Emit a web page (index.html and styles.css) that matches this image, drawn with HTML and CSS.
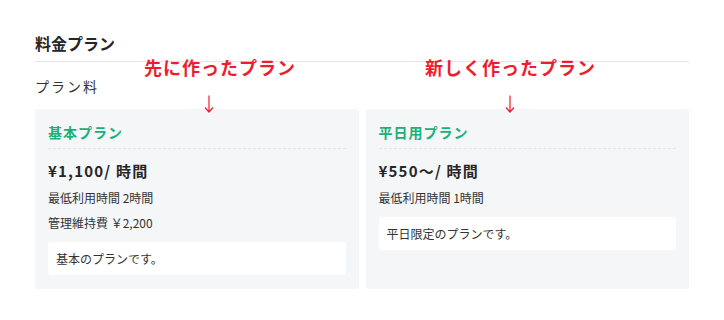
FILE: index.html
```html
<!DOCTYPE html>
<html lang="ja">
<head>
    <meta charset="UTF-8">
    <meta name="viewport" content="width=device-width, initial-scale=1.0">
    <title>料金プラン</title>
    <link rel="stylesheet" href="styles.css">
</head>
<body>

    <!-- Pricing Section -->
    <div class="page">
        <h2 class="section-title">料金プラン</h2>
        <p class="label">プラン料</p>

        <div class="plans">
            <div class="plan">
                <h3 class="plan-name">基本プラン</h3>
                <p class="price">¥1,100/ 時間</p>
                <p class="detail">最低利用時間 2時間</p>
                <p class="detail">管理維持費 ￥2,200</p>
                <div class="note">基本のプランです。</div>
            </div>
            <div class="plan">
                <h3 class="plan-name">平日用プラン</h3>
                <p class="price">¥550〜/ 時間</p>
                <p class="detail">最低利用時間 1時間</p>
                <div class="note">平日限定のプランです。</div>
            </div>
        </div>

        <!-- annotations drawn over the screenshot -->
        <div class="annotation annotation-old">先に作ったプラン</div>
        <svg class="arrow arrow-old" width="10" height="18" viewBox="0 0 10 18">
            <path d="M5 0.5 V17 M1 12.5 L5 17 L9 12.5" fill="none" stroke="currentColor" stroke-width="1.2"/>
        </svg>
        <div class="annotation annotation-new">新しく作ったプラン</div>
        <svg class="arrow arrow-new" width="10" height="18" viewBox="0 0 10 18">
            <path d="M5 0.5 V17 M1 12.5 L5 17 L9 12.5" fill="none" stroke="currentColor" stroke-width="1.2"/>
        </svg>
    </div>

</body>
</html>
```

FILE: styles.css
```css
:root {
    --green: #19b17a;
    --red: #ee1d2d;
    --dark: #262626;
    --card: #f5f6f8;
}

* {
    margin: 0;
    padding: 0;
    box-sizing: border-box;
    font-family: "Noto Sans CJK JP", "Noto Sans", sans-serif;
}

body {
    background: #fff;
    color: var(--dark);
}

.page {
    position: relative;
    padding: 31px 35px 0;
}

.section-title {
    font-size: 16px;
    font-weight: bold;
    line-height: 24px;
    padding-bottom: 6px;
    border-bottom: 1px solid #e4e4e4;
}

.label {
    font-size: 14px;
    line-height: 21px;
    letter-spacing: 2px;
    color: #333;
    margin-top: 14px;
}

.plans {
    display: grid;
    grid-template-columns: 1fr 1fr;
    gap: 7px;
    margin-top: 12px;
}

.plan {
    background: var(--card);
    border-radius: 3px;
    padding: 13px 13px 13px;
    min-height: 180px;
}

.plan-name {
    font-size: 14px;
    font-weight: bold;
    line-height: 21px;
    letter-spacing: 1px;
    color: var(--green);
    padding-bottom: 5px;
    border-bottom: 1px dashed #e2e4e8;
}

.price {
    font-size: 15px;
    font-weight: bold;
    line-height: 22px;
    letter-spacing: 1.2px;
    margin-top: 11px;
    margin-bottom: 3px;
}

.detail {
    font-size: 12px;
    line-height: 25px;
    color: #333;
}

.detail:first-of-type {
    margin-top: 3px;
}

.note {
    background: #fff;
    border-radius: 3px;
    font-size: 12px;
    line-height: 17px;
    color: #333;
    padding: 8px 8px;
    margin-top: 7px;
}

.annotation {
    position: absolute;
    top: 54px;
    font-size: 18px;
    font-weight: bold;
    line-height: 27px;
    letter-spacing: 1px;
    color: var(--red);
}

.annotation-old {
    left: 144px;
}

.annotation-new {
    left: 425px;
}

.arrow {
    position: absolute;
    top: 95px;
    color: var(--red);
}

.arrow-old {
    left: 204px;
}

.arrow-new {
    left: 505px;
}
```
